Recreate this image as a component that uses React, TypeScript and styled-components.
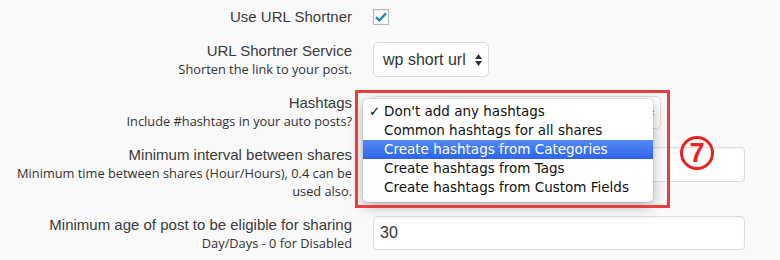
import React from "react";
import styled, { createGlobalStyle } from "styled-components";

const GlobalStyle = createGlobalStyle`
  body {
    margin: 0;
    background: #f9f9f9;
  }
`;

const Form = styled.div`
  display: flex;
  flex-direction: column;
  gap: 15px;
  padding-top: 7px;
`;

const Row = styled.div`
  display: grid;
  grid-template-columns: 352px 372px;
  column-gap: 21px;
  align-items: start;
`;

const Label = styled.div`
  text-align: right;
`;

const Title = styled.div`
  font-family: "Liberation Sans", Arial, sans-serif;
  font-size: 15px;
  line-height: 19px;
  color: #3a3a3a;
`;

const Hint = styled.div`
  font-family: "Open Sans", sans-serif;
  font-size: 12.8px;
  line-height: 18px;
  color: #333;
`;

const Cell = styled.div<{ $top: number; $raised?: boolean }>`
  position: relative;
  z-index: ${(p) => (p.$raised ? 2 : "auto")};
  padding-top: ${(p) => p.$top}px;
`;

const Checkbox = styled.span`
  display: flex;
  align-items: center;
  justify-content: center;
  width: 16px;
  height: 16px;
  box-sizing: border-box;
  border: 1px solid #b4b9be;
  background: #fff;
  box-shadow: inset 0 1px 2px rgba(0, 0, 0, 0.1);
`;

const SelectBox = styled.div<{ $width: number; $height: number }>`
  display: flex;
  align-items: center;
  justify-content: space-between;
  box-sizing: border-box;
  width: ${(p) => p.$width}px;
  height: ${(p) => p.$height}px;
  padding: 0 6px 0 9px;
  background: #fff;
  border: 1px solid #dcdcdc;
  border-radius: 5px;
  font-family: "Liberation Sans", Arial, sans-serif;
  font-size: 16px;
  color: #333;
`;

const Input = styled.div<{ $height: number }>`
  display: flex;
  align-items: center;
  box-sizing: border-box;
  width: 372px;
  height: ${(p) => p.$height}px;
  padding: 0 6px;
  background: #fff;
  border: 1px solid #dddddd;
  border-radius: 4px;
  box-shadow: inset 0 1px 2px rgba(0, 0, 0, 0.05);
  font-family: "Liberation Sans", Arial, sans-serif;
  font-size: 16px;
  color: #333;
`;

const Menu = styled.ul`
  position: absolute;
  left: -10px;
  top: 6px;
  width: 290px;
  margin: 0;
  padding: 3px 0 5px;
  list-style: none;
  box-sizing: border-box;
  background: #fff;
  border-radius: 5px;
  box-shadow: 0 4px 14px rgba(0, 0, 0, 0.3), 0 0 0 1px rgba(0, 0, 0, 0.06);
`;

const MenuItem = styled.li<{ $active?: boolean }>`
  position: relative;
  height: 19px;
  line-height: 19px;
  padding-left: 21px;
  font-family: "DejaVu Sans", sans-serif;
  font-size: 13.5px;
  color: ${(p) => (p.$active ? "#fff" : "#111")};
  background: ${(p) =>
    p.$active ? "linear-gradient(#5289f6, #2f64e8)" : "transparent"};
`;

const Tick = styled.span`
  position: absolute;
  left: 6px;
  top: 0;
  font-weight: bold;
`;

const Frame = styled.div`
  position: absolute;
  left: -18px;
  top: -3px;
  width: 315px;
  height: 118px;
  box-sizing: border-box;
  border: 3px solid #e5403c;
`;

const Badge = styled.span`
  position: absolute;
  left: 307px;
  top: 43px;
  display: flex;
  align-items: center;
  justify-content: center;
  width: 34px;
  height: 34px;
  box-sizing: border-box;
  border: 3px solid #e8231f;
  border-radius: 50%;
  font-family: "Liberation Sans", Arial, sans-serif;
  font-weight: bold;
  font-size: 27px;
  line-height: 1;
  color: #e8231f;
`;

const Arrows = () => (
  <svg width="7" height="12" viewBox="0 0 7 12">
    <path d="M3.5 0 L7 5 H0 Z M0 7 H7 L3.5 12 Z" fill="#333" />
  </svg>
);

const hashtagOptions = [
  "Don't add any hashtags",
  "Common hashtags for all shares",
  "Create hashtags from Categories",
  "Create hashtags from Tags",
  "Create hashtags from Custom Fields",
];

export default function App() {
  return (
    <>
      <GlobalStyle />
      <Form>
        <Row>
          <Label>
            <Title>Use URL Shortner</Title>
          </Label>
          <Cell $top={2}>
            <Checkbox>
              <svg width="12" height="10" viewBox="0 0 12 10">
                <path
                  d="M1 5.2 L4.4 8.4 L11 1.4"
                  fill="none"
                  stroke="#1e8cbe"
                  strokeWidth="2.4"
                />
              </svg>
            </Checkbox>
          </Cell>
        </Row>

        <Row>
          <Label>
            <Title>URL Shortner Service</Title>
            <Hint>Shorten the link to your post.</Hint>
          </Label>
          <Cell $top={1}>
            <SelectBox $width={116} $height={35}>
              wp short url
              <Arrows />
            </SelectBox>
          </Cell>
        </Row>

        <Row>
          <Label>
            <Title>Hashtags</Title>
            <Hint>Include #hashtags in your auto posts?</Hint>
          </Label>
          <Cell $top={3} $raised>
            <SelectBox $width={288} $height={33}>
              <span />
              <Arrows />
            </SelectBox>
            <Menu>
              {hashtagOptions.map((opt, i) => (
                <MenuItem key={opt} $active={i === 2}>
                  {i === 0 && <Tick>✓</Tick>}
                  {opt}
                </MenuItem>
              ))}
            </Menu>
            <Frame />
            <Badge>7</Badge>
          </Cell>
        </Row>

        <Row>
          <Label>
            <Title>Minimum interval between shares</Title>
            <Hint>
              Minimum time between shares (Hour/Hours), 0.4 can be used also.
            </Hint>
          </Label>
          <Cell $top={2}>
            <Input $height={35} />
          </Cell>
        </Row>

        <Row>
          <Label>
            <Title>Minimum age of post to be eligible for sharing</Title>
            <Hint>Day/Days - 0 for Disabled</Hint>
          </Label>
          <Cell $top={1}>
            <Input $height={34}>30</Input>
          </Cell>
        </Row>
      </Form>
    </>
  );
}
